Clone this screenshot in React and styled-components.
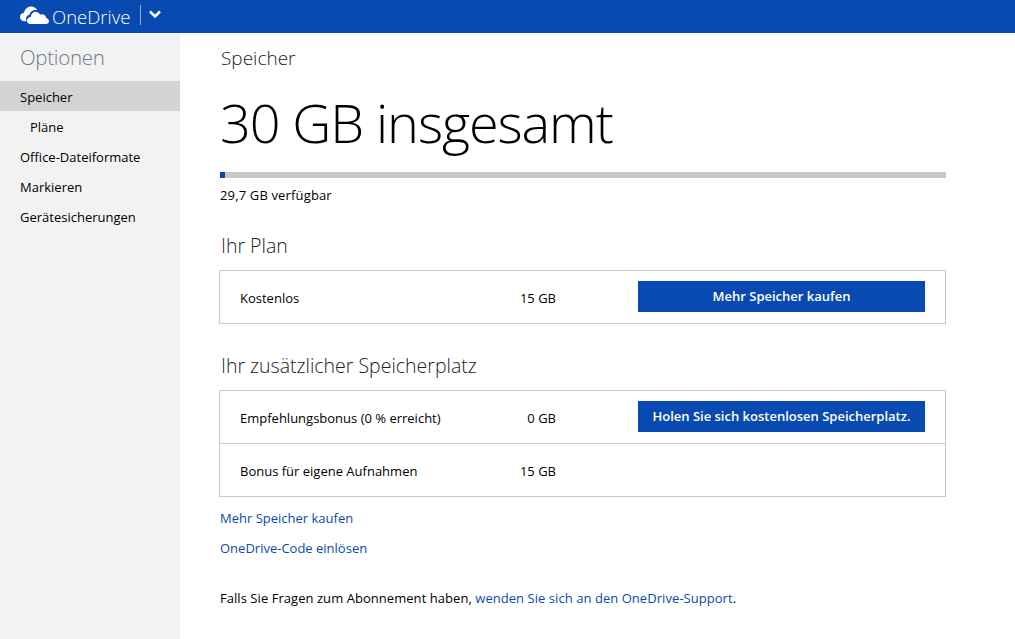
import React from 'react'
import styled, { createGlobalStyle } from 'styled-components'

const GlobalStyle = createGlobalStyle`
  html, body {
    margin: 0;
    padding: 0;
    height: 100%;
    background: #fff;
    overflow: hidden;
    font-family: "Open Sans", "Noto Sans", "Liberation Sans", sans-serif;
    color: #000;
  }
`

const Page = styled.div`
  width: 1015px;
  height: 639px;
  display: flex;
  flex-direction: column;
`

const TopBar = styled.header`
  height: 33px;
  flex: none;
  background: #094ab2;
  display: flex;
  align-items: center;
  padding-left: 20px;
  color: #fff;
`

const Logo = styled.svg`
  width: 29px;
  height: 18px;
  margin-top: -4px;
`

const Brand = styled.span`
  font-size: 18.5px;
  font-weight: 300;
  margin-left: 3px;
  line-height: 33px;
`

const Divider = styled.span`
  width: 1px;
  height: 20px;
  background: #8fb0e0;
  margin: -4px 0 0 10px;
`

const Chevron = styled.svg`
  width: 12px;
  height: 8px;
  margin: -6px 0 0 8px;
`

const Body = styled.div`
  flex: 1;
  display: flex;
  min-height: 0;
`

const Sidebar = styled.nav`
  width: 180px;
  flex: none;
  background: #f2f2f2;
`

const SideTitle = styled.h2`
  margin: 0;
  height: 48px;
  padding-left: 20px;
  font-size: 20.5px;
  font-weight: 300;
  line-height: 48px;
  color: #6f7a88;
  letter-spacing: -0.3px;
`

const SideItem = styled.a`
  display: block;
  height: 30px;
  line-height: 33px;
  font-size: 13px;
  color: #000;
  padding-left: ${p => (p.$sub ? 30 : 20)}px;
  background: ${p => (p.$active ? '#d3d3d3' : 'transparent')};
`

const Main = styled.main`
  width: 726px;
  margin-left: 40px;
  display: flex;
  flex-direction: column;
`

const PageTitle = styled.h1`
  margin: 0;
  height: 50px;
  font-size: 19px;
  font-weight: 300;
  line-height: 50px;
  padding-left: 1px;
  color: #222;
`

const Total = styled.div`
  height: 89px;
  font-size: 54px;
  font-weight: 300;
  line-height: 79px;
  letter-spacing: -1.1px;
  color: #000;
`

const Meter = styled.div`
  height: 6px;
  background: #c8c8c8;
`

const MeterFill = styled.div`
  height: 100%;
  background: #094ab2;
`

const Available = styled.p`
  margin: 0;
  height: 33px;
  font-size: 13px;
  line-height: 34px;
  letter-spacing: 0.15px;
`

const SectionTitle = styled.h3`
  margin: 0;
  height: 50px;
  font-size: 19.5px;
  font-weight: 300;
  line-height: 52px;
  padding-left: 1px;
  color: #222;
`

const Table = styled.section`
  border: 1px solid #c8c8c8;
  margin-left: -1px;
  display: flex;
  flex-direction: column;
`

const Row = styled.div`
  height: 52px;
  display: grid;
  grid-template-columns: 199px 117px 82px 287px;
  align-items: center;
  padding-left: 20px;
  font-size: 13px;
  white-space: nowrap;
  & + & {
    border-top: 1px solid #c8c8c8;
  }
`

const Label = styled.span`
  padding-top: 2px;
`

const Size = styled.span`
  padding-top: 2px;
  text-align: right;
  grid-column: 2;
`

const ActionButton = styled.button`
  grid-column: 4;
  height: 31px;
  margin-bottom: 2px;
  border: none;
  padding: 0;
  background: #094ab2;
  color: #fff;
  font-family: inherit;
  font-size: 13px;
  font-weight: 600;
`

const Gap = styled.div`
  height: ${p => p.$h}px;
  flex: none;
`

const LinkLine = styled.a`
  display: block;
  height: 30px;
  line-height: 30px;
  font-size: 13px;
  color: #094ab2;
`

const Note = styled.p`
  margin: 25px 0 0;
  font-size: 13px;
  line-height: 20px;
  letter-spacing: 0.05px;
  a {
    color: #094ab2;
  }
`

function CloudLogo() {
  return (
    <Logo viewBox="0 0 29 18">
      <path
        fill="#fff"
        d="M9.800 15.200H4.600C2 15.200 0 13.400 0 11c0-2.300 1.700-4.100 4-4.300C4.800 3 7.700.500 11.200.500c2.500 0 4.700 1.200 6 3.700-.6-.1-1.100-.1-1.600-.1-3 0-5.400 1.900-6.200 4.600-2 .4-3.400 2-3.400 4 0 .9.300 1.800.800 2.500z"
      />
      <path
        fill="#fff"
        d="M9.500 18c-1.500-.4-2.500-1.800-2.500-3.500 0-1.700 1.300-3.200 3.100-3.400l.6-.1.100-.6c.5-2.700 2.500-4.700 4.900-4.700 1.900 0 3.500 1.200 4.400 3 .6-.3 1.200-.4 1.900-.4 2.300 0 4.200 1.700 4.400 4 1.500.2 2.600 1.500 2.600 3 0 1.600-1.300 2.700-3 2.700z"
      />
    </Logo>
  )
}

export default function App() {
  return (
    <Page>
      <GlobalStyle />
      <TopBar>
        <CloudLogo />
        <Brand>OneDrive</Brand>
        <Divider />
        <Chevron viewBox="0 0 12 8">
          <path d="M1 1.500l5 5 5-5" fill="none" stroke="#fff" strokeWidth="2.500" />
        </Chevron>
      </TopBar>
      <Body>
        <Sidebar>
          <SideTitle>Optionen</SideTitle>
          <SideItem $active>Speicher</SideItem>
          <SideItem $sub>Pläne</SideItem>
          <SideItem>Office-Dateiformate</SideItem>
          <SideItem>Markieren</SideItem>
          <SideItem>Gerätesicherungen</SideItem>
        </Sidebar>
        <Main>
          <PageTitle>Speicher</PageTitle>
          <Total>30 GB insgesamt</Total>
          <Meter>
            <MeterFill style={{ width: `${(5 / 726) * 100}%` }} />
          </Meter>
          <Available>29,7 GB verfügbar</Available>
          <Gap $h={9} />
          <SectionTitle>Ihr Plan</SectionTitle>
          <Table>
            <Row>
              <Label>Kostenlos</Label>
              <Size>15 GB</Size>
              <ActionButton>Mehr Speicher kaufen</ActionButton>
            </Row>
          </Table>
          <Gap $h={16} />
          <SectionTitle>Ihr zusätzlicher Speicherplatz</SectionTitle>
          <Table>
            <Row>
              <Label>Empfehlungsbonus (0 % erreicht)</Label>
              <Size>0 GB</Size>
              <ActionButton>Holen Sie sich kostenlosen Speicherplatz.</ActionButton>
            </Row>
            <Row>
              <Label>Bonus für eigene Aufnahmen</Label>
              <Size>15 GB</Size>
            </Row>
          </Table>
          <Gap $h={6} />
          <LinkLine>Mehr Speicher kaufen</LinkLine>
          <LinkLine>OneDrive-Code einlösen</LinkLine>
          <Note>
            Falls Sie Fragen zum Abonnement haben, <a>wenden Sie sich an den OneDrive-Support</a>.
          </Note>
        </Main>
      </Body>
    </Page>
  )
}
